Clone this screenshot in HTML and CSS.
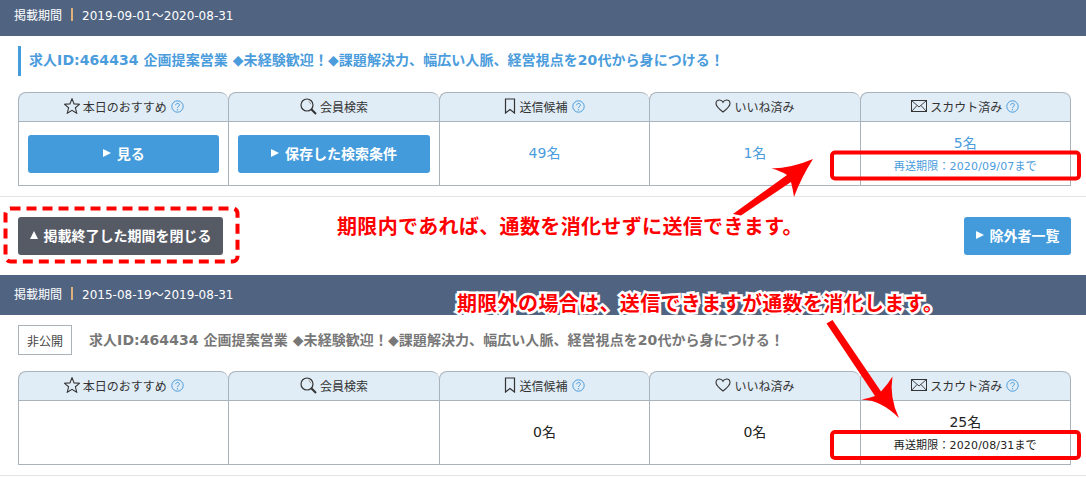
FILE: index.html
```html
<!DOCTYPE html>
<html lang="ja">
<head>
<meta charset="utf-8">
<title>掲載期間</title>
<link rel="stylesheet" href="styles.css">
</head>
<body>
<svg width="0" height="0" class="defs">
  <defs>
    <symbol id="i-star" viewBox="0 0 16 16"><path d="M8 .8 10.100 5.900l5.400.4-4.100 3.500 1.300 5.400L8 12.300 3.300 15.200l1.300-5.400L.5 6.300l5.400-.4z" fill="none" stroke="#333" stroke-width="1.100"/></symbol>
    <symbol id="i-search" viewBox="0 0 17 17"><circle cx="7" cy="7" r="6" fill="none" stroke="#333" stroke-width="1.200"/><path d="M11.300 11.300 16 16" stroke="#333" stroke-width="2"/><path d="M8.500 3.200a4.200 4.200 0 0 1 2.300 3" fill="none" stroke="#999" stroke-width="1"/></symbol>
    <symbol id="i-mark" viewBox="0 0 12 16"><path d="M1.500 1h9v14L6 11.500 1.500 15z" fill="none" stroke="#333" stroke-width="1.200"/></symbol>
    <symbol id="i-heart" viewBox="0 0 16 14"><path d="M8 13C4 10 1 7.500 1 4.500 1 2.500 2.500 1 4.500 1 6 1 7.300 1.800 8 3.200 8.700 1.800 10 1 11.500 1 13.500 1 15 2.500 15 4.500 15 7.500 12 10 8 13z" fill="none" stroke="#333" stroke-width="1.100"/></symbol>
    <symbol id="i-mail" viewBox="0 0 16 12"><rect x=".5" y=".5" width="15" height="11" fill="none" stroke="#333"/><path d="M.5.500 8 7l7.500-6.500M.5 11.500 6 5.500M15.500 11.500 10 5.500" fill="none" stroke="#333" stroke-width=".9"/></symbol>
    <symbol id="i-help" viewBox="0 0 13 13"><circle cx="6.500" cy="6.500" r="5.700" fill="none" stroke="#4a9cdc" stroke-width="1"/><path d="M4.700 5.200c0-2.400 3.700-2.400 3.700-.2 0 1.400-1.900 1.500-1.900 3" fill="none" stroke="#4a9cdc" stroke-width="1"/><circle cx="6.500" cy="9.800" r=".7" fill="#4a9cdc"/></symbol>
  </defs>
</svg>

<section class="period">
  <div class="bar"><span class="bar-label">掲載期間</span><span class="bar-dates">2019-09-01～2020-08-31</span></div>
  <div class="body">
    <div class="job-head"><h2 class="job-title job-title-live">求人ID:464434 企画提案営業 ◆未経験歓迎！◆課題解決力、幅広い人脈、経営視点を20代から身につける！</h2></div>
    <div class="grid">
      <div class="th"><svg class="ico ico-star"><use href="#i-star"/></svg>本日のおすすめ<svg class="help"><use href="#i-help"/></svg></div>
      <div class="th"><svg class="ico ico-search"><use href="#i-search"/></svg>会員検索</div>
      <div class="th"><svg class="ico ico-mark"><use href="#i-mark"/></svg>送信候補<svg class="help"><use href="#i-help"/></svg></div>
      <div class="th"><svg class="ico ico-heart"><use href="#i-heart"/></svg>いいね済み</div>
      <div class="th"><svg class="ico ico-mail"><use href="#i-mail"/></svg>スカウト済み<svg class="help"><use href="#i-help"/></svg></div>
      <div class="td"><a class="btn btn-wide"><i class="tri"></i>見る</a></div>
      <div class="td"><a class="btn btn-wide"><i class="tri"></i>保存した検索条件</a></div>
      <div class="td num">49名</div>
      <div class="td num">1名</div>
      <div class="td num num-stack"><span>5名</span><small class="limit">再送期限：2020/09/07まで</small></div>
    </div>
  </div>
</section>

<div class="controls">
  <a class="btn btn-dark"><i class="tri-up"></i>掲載終了した期間を閉じる</a>
  <a class="btn btn-side"><i class="tri"></i>除外者一覧</a>
</div>

<section class="period">
  <div class="bar"><span class="bar-label">掲載期間</span><span class="bar-dates">2015-08-19～2019-08-31</span></div>
  <div class="body">
    <div class="job-head"><span class="tag">非公開</span><h2 class="job-title job-title-off">求人ID:464434 企画提案営業 ◆未経験歓迎！◆課題解決力、幅広い人脈、経営視点を20代から身につける！</h2></div>
    <div class="grid grid-off">
      <div class="th"><svg class="ico ico-star"><use href="#i-star"/></svg>本日のおすすめ<svg class="help"><use href="#i-help"/></svg></div>
      <div class="th"><svg class="ico ico-search"><use href="#i-search"/></svg>会員検索</div>
      <div class="th"><svg class="ico ico-mark"><use href="#i-mark"/></svg>送信候補<svg class="help"><use href="#i-help"/></svg></div>
      <div class="th"><svg class="ico ico-heart"><use href="#i-heart"/></svg>いいね済み</div>
      <div class="th"><svg class="ico ico-mail"><use href="#i-mail"/></svg>スカウト済み<svg class="help"><use href="#i-help"/></svg></div>
      <div class="td"></div>
      <div class="td"></div>
      <div class="td num">0名</div>
      <div class="td num">0名</div>
      <div class="td num num-stack"><span>25名</span><small class="limit">再送期限：2020/08/31まで</small></div>
    </div>
  </div>
</section>

<svg class="marks" width="1086" height="477" viewBox="0 0 1086 477">
  <rect class="box" x="832" y="152.500" width="247" height="26" rx="3"/>
  <rect class="box" x="832" y="432" width="247" height="26" rx="3"/>
  <rect class="dash" x="5.500" y="208.500" width="232" height="53" rx="5"/>
  <path class="arrow" d="M813 159Q792 168 771.500 168.500Q781 171 787 175L733 214L741 215.500L791 182Q793 190 794 197Q801 178 813 159z"/>
  <path class="arrow" d="M899 418Q889 397 892.500 376.500Q888 384 881 391.500L832.500 320L826.500 323.500L875 396Q869 398 861.500 399.500Q881 400 899 418z"/>
</svg>
<p class="note note-in">期限内であれば、通数を消化せずに送信できます。</p>
<p class="note note-out">期限外の場合は、送信できますが通数を消化します。</p>
</body>
</html>
```
FILE: styles.css
```css
* { box-sizing: border-box; }
html, body { overflow: hidden; }
body {
  margin: -4px 0 0;
  position: relative;
  height: 481px;
  background: #fff;
  color: #333;
  font-family: "DejaVu Sans", "Noto Sans CJK JP", sans-serif;
  font-size: 12px;
}
.defs { position: absolute; }
.bar {
  height: 40px;
  background: #506482;
  color: #fff;
  display: flex;
  align-items: center;
  padding: 0 0 4px 14px;
  font-size: 12px;
}
.bar-label {
  padding-right: 10px;
  margin-right: 10px;
  position: relative;
  font-size: 12px;
}
.bar-label::after {
  content: "";
  position: absolute;
  right: -1px;
  top: 2px;
  bottom: 2px;
  width: 2px;
  background: #dcb27a;
}
.body {
  padding: 10px 15px 10px 18px;
  border-bottom: 1px solid #e4e4e4;
}
.job-head {
  display: flex;
  align-items: center;
  height: 30px;
  margin-bottom: 16px;
}
.job-title {
  margin: 0;
  font-size: 14px;
  font-weight: 700;
  letter-spacing: .06px;
  white-space: nowrap;
}
.job-title-live {
  color: #4a9cdc;
  border-left: 3px solid #459cdc;
  height: 30px;
  line-height: 28px;
  padding-left: 8px;
}
.job-title-off { color: #777; padding-bottom: 3px; }
.tag {
  width: 54px;
  height: 30px;
  border: 1px solid #a9b3bb;
  color: #444;
  display: flex;
  align-items: center;
  justify-content: center;
  margin-right: 17px;
  font-family: "Noto Sans CJK JP", sans-serif;
}
.grid {
  display: grid;
  grid-template-columns: repeat(5, 1fr);
  grid-template-rows: 30px 63px;
  border-bottom: 1px solid #a9b3bb;
  border-right: 1px solid #a9b3bb;
  border-top-right-radius: 8px;
}
.th {
  background: #e0ecf6;
  border: 1px solid #a9b3bb;
  border-right: 0;
  border-radius: 8px 8px 0 0;
  display: flex;
  align-items: center;
  justify-content: center;
  padding-bottom: 2px;
  color: #333;
  white-space: nowrap;
  font-family: "Noto Sans CJK JP", sans-serif;
}
.th:nth-child(5) { border-top-right-radius: 8px; }
.td {
  border-left: 1px solid #a9b3bb;
  padding: 13px 9px 0;
}
.num {
  padding: 0 0 3px;
  display: flex;
  flex-direction: column;
  align-items: center;
  justify-content: center;
  color: #4a9cdc;
  font-size: 14px;
}
.num-stack { justify-content: flex-start; padding: 10px 0 0; }
.grid-off .num { color: #222; }
.limit { font-size: 11px; letter-spacing: .15px; margin-top: 5px; white-space: nowrap; }
.ico { margin-right: 3px; flex: none; }
.ico-star { width: 16px; height: 16px; }
.ico-search { width: 17px; height: 17px; }
.ico-mark { width: 12px; height: 16px; margin-right: 3px; }
.ico-heart { width: 16px; height: 14px; }
.ico-mail { width: 16px; height: 12px; }
.help { width: 13px; height: 13px; margin-left: 4px; flex: none; }
.btn {
  height: 38px;
  border-radius: 3px;
  background: #439bdb;
  color: #fff;
  font-size: 14px;
  font-weight: 700;
  font-family: "Noto Sans CJK JP", sans-serif;
  display: flex;
  align-items: center;
  justify-content: center;
  padding-bottom: 2px;
  white-space: nowrap;
}
.btn-wide { width: 100%; }
.tri {
  width: 0;
  height: 0;
  border-left: 8px solid #fff;
  border-top: 4.500px solid transparent;
  border-bottom: 4.500px solid transparent;
  margin-right: 6px;
}
.tri-up {
  width: 0;
  height: 0;
  border-bottom: 8px solid #fff;
  border-left: 4.500px solid transparent;
  border-right: 4.500px solid transparent;
  margin-right: 6px;
}
.controls {
  display: flex;
  justify-content: space-between;
  padding: 20px 15px 20px 18px;
}
.btn-dark { width: 205px; background: #555a65; }
.btn-side { width: 107px; }
.marks {
  position: absolute;
  left: 0;
  top: 4px;
  pointer-events: none;
}
.box { fill: none; stroke: #f00; stroke-width: 4; }
.dash { fill: none; stroke: #f00; stroke-width: 4; stroke-dasharray: 10 6; }
.arrow { fill: #f00; }
.note {
  position: absolute;
  margin: 0;
  color: #f00;
  font-family: "Noto Sans CJK JP", sans-serif;
  font-size: 20px;
  font-weight: 700;
  line-height: 24px;
  letter-spacing: .35px;
  white-space: nowrap;
}
.note-in { left: 337px; top: 218px; }
.note-out {
  left: 457px;
  top: 295px;
  paint-order: stroke fill;
  -webkit-text-stroke: 5px #fff;
}
```
